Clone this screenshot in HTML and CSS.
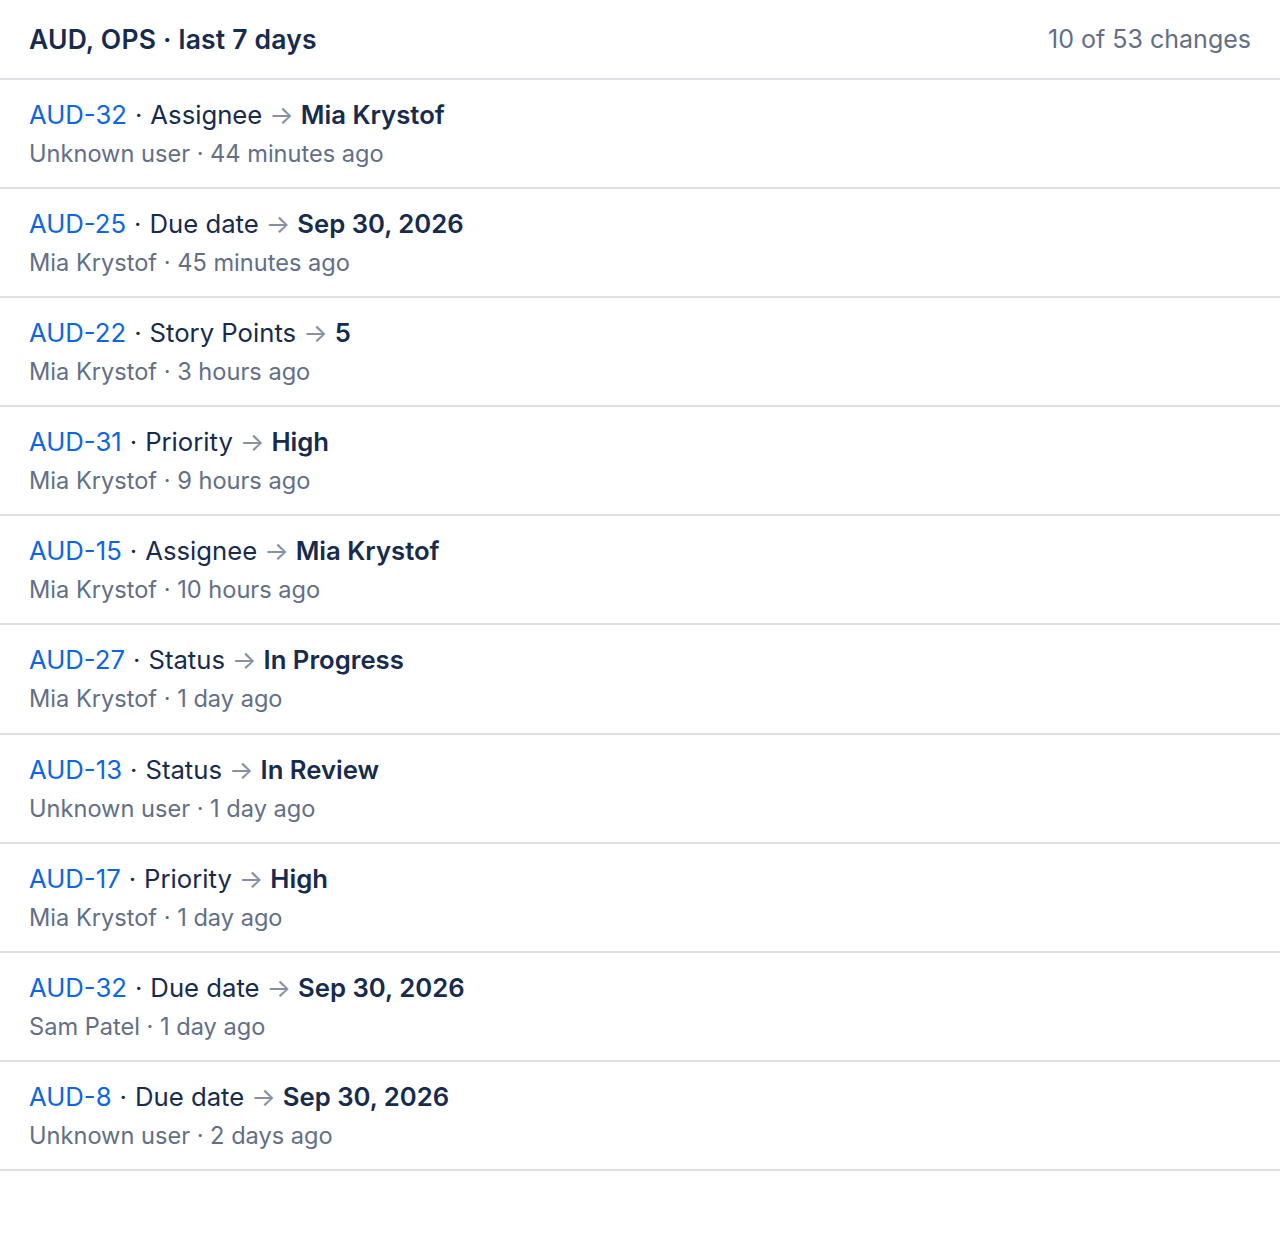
FILE: index.html
```html
<!DOCTYPE html>
<html lang="en">
<head>
<meta charset="utf-8">
<title>Changes</title>
<link rel="stylesheet" href="styles.css">
</head>
<body>
<div class="panel">
  <header class="head">
    <h1 class="title">AUD, OPS · last 7 days</h1>
    <span class="count">10 of 53 changes</span>
  </header>
  <ul class="list">
    <li class="row">
      <div class="main"><a class="key">AUD-32</a><span class="sep">·</span><span class="field">Assignee</span><span class="arrow">→</span><span class="value">Mia Krystof</span></div>
      <div class="meta">Unknown user · 44 minutes ago</div>
    </li>
    <li class="row">
      <div class="main"><a class="key">AUD-25</a><span class="sep">·</span><span class="field">Due date</span><span class="arrow">→</span><span class="value">Sep 30, 2026</span></div>
      <div class="meta">Mia Krystof · 45 minutes ago</div>
    </li>
    <li class="row">
      <div class="main"><a class="key">AUD-22</a><span class="sep">·</span><span class="field">Story Points</span><span class="arrow">→</span><span class="value">5</span></div>
      <div class="meta">Mia Krystof · 3 hours ago</div>
    </li>
    <li class="row">
      <div class="main"><a class="key">AUD-31</a><span class="sep">·</span><span class="field">Priority</span><span class="arrow">→</span><span class="value">High</span></div>
      <div class="meta">Mia Krystof · 9 hours ago</div>
    </li>
    <li class="row">
      <div class="main"><a class="key">AUD-15</a><span class="sep">·</span><span class="field">Assignee</span><span class="arrow">→</span><span class="value">Mia Krystof</span></div>
      <div class="meta">Mia Krystof · 10 hours ago</div>
    </li>
    <li class="row">
      <div class="main"><a class="key">AUD-27</a><span class="sep">·</span><span class="field">Status</span><span class="arrow">→</span><span class="value">In Progress</span></div>
      <div class="meta">Mia Krystof · 1 day ago</div>
    </li>
    <li class="row">
      <div class="main"><a class="key">AUD-13</a><span class="sep">·</span><span class="field">Status</span><span class="arrow">→</span><span class="value">In Review</span></div>
      <div class="meta">Unknown user · 1 day ago</div>
    </li>
    <li class="row">
      <div class="main"><a class="key">AUD-17</a><span class="sep">·</span><span class="field">Priority</span><span class="arrow">→</span><span class="value">High</span></div>
      <div class="meta">Mia Krystof · 1 day ago</div>
    </li>
    <li class="row">
      <div class="main"><a class="key">AUD-32</a><span class="sep">·</span><span class="field">Due date</span><span class="arrow">→</span><span class="value">Sep 30, 2026</span></div>
      <div class="meta">Sam Patel · 1 day ago</div>
    </li>
    <li class="row">
      <div class="main"><a class="key">AUD-8</a><span class="sep">·</span><span class="field">Due date</span><span class="arrow">→</span><span class="value">Sep 30, 2026</span></div>
      <div class="meta">Unknown user · 2 days ago</div>
    </li>
  </ul>
</div>
</body>
</html>
```

FILE: styles.css
```css
* { box-sizing: border-box; }
html, body { margin: 0; padding: 0; background: #ffffff; }
body {
  font-family: Inter, "Noto Sans", "Liberation Sans", sans-serif;
  color: #172b4d;
}
.panel { width: 1280px; }
.head {
  height: 80px;
  display: flex;
  align-items: center;
  justify-content: space-between;
  padding: 0 29px 0 29px;
  border-bottom: 2px solid #dcdfe4;
}
.title {
  margin: 0;
  font-size: 26.5px;
  font-weight: 600;
  letter-spacing: 0.2px;
  color: #172b4d;
}
.count {
  font-size: 25px;
  color: #626f86;
}
.list { list-style: none; margin: 0; padding: 0; }
.row {
  padding: 16px 29px 15.1px 29px;
  border-bottom: 2px solid #dcdfe4;
}
.main {
  height: 38px;
  line-height: 38px;
  font-size: 25.7px;
  white-space: nowrap;
  color: #172b4d;
}
.key { color: #0c66e4; text-decoration: none; }
.sep { margin: 0 8px; }
.arrow { color: #8590a2; margin: 0 7px; }
.value { font-weight: 600; }
.meta {
  margin-top: 2px;
  height: 36px;
  line-height: 36px;
  font-size: 23.6px;
  color: #626f86;
  white-space: nowrap;
}
```
